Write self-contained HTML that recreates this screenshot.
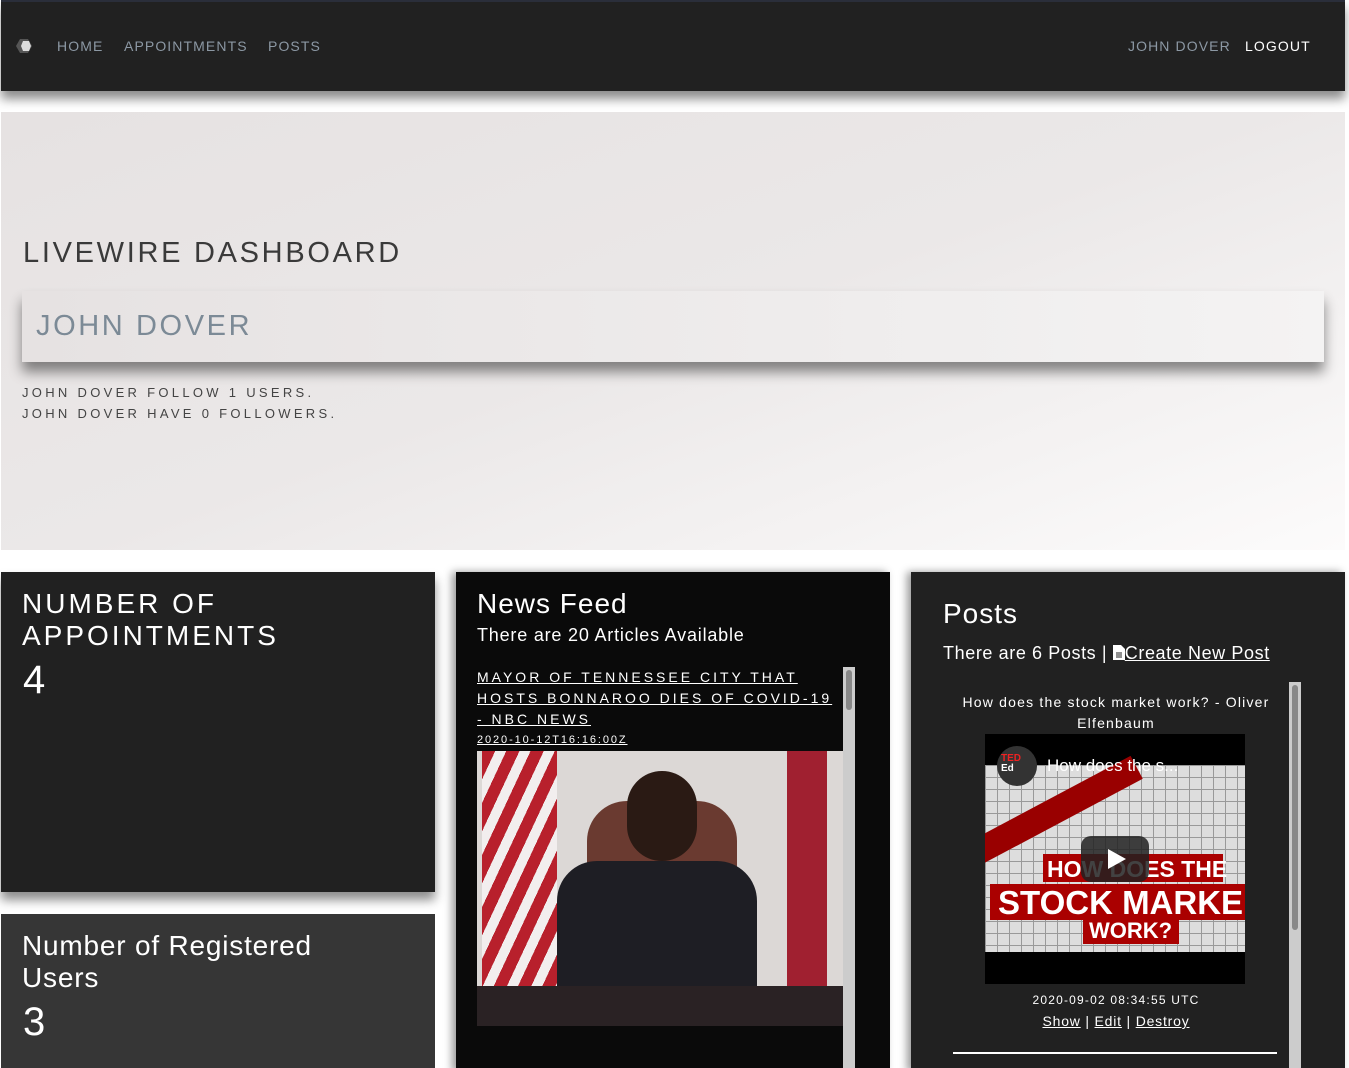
<!DOCTYPE html>
<html><head><meta charset="utf-8"><style>
*{margin:0;padding:0;box-sizing:border-box}
html,body{width:1349px;height:1068px;overflow:hidden}
body{background:#fff;font-family:"Liberation Sans",sans-serif;position:relative}
.abs{position:absolute}
.nav{left:1px;top:0;width:1344px;height:91px;background:#212121;border-top:2px solid #2a2e3a;box-shadow:0 8px 10px rgba(0,0,0,.45)}
.nav a{position:absolute;top:36px;font-size:14px;letter-spacing:1.1px;color:#8c98a4;text-decoration:none}
.hero{left:1px;top:112px;width:1344px;height:438px;background:linear-gradient(160deg,#e6e2e2 0%,#ebe8e8 50%,#fcfbfb 100%)}
.card{background:#212121;color:#fff}
a.u{color:#fff;text-decoration:underline}
</style></head><body>
<div class="abs nav">
 <svg class="abs" style="left:14px;top:36px" width="18" height="16" viewBox="0 0 18 16"><polygon points="5,1 13,1 17,8 13,15 5,15 1,8" fill="#555"/><polygon points="8,3 14,3 16,8 14,13 8,13 6,8" fill="#ddd"/></svg>
 <a style="left:56px">HOME</a><a style="left:123px">APPOINTMENTS</a><a style="left:267px">POSTS</a>
 <a style="left:1127px">JOHN DOVER</a><a style="left:1244px;color:#fff">LOGOUT</a>
</div>
<div class="abs hero">
 <div class="abs" style="left:22px;top:125px;font-size:29px;letter-spacing:2.7px;color:#3a3a3a">LIVEWIRE DASHBOARD</div>
 <div class="abs" style="left:21px;top:179px;width:1302px;height:71px;background:linear-gradient(90deg,#e6e2e2,#f4f3f3);box-shadow:0 10px 12px rgba(0,0,0,.45)">
  <div class="abs" style="left:14px;top:19px;font-size:29px;letter-spacing:2.6px;color:#7c8a96">JOHN DOVER</div></div>
 <div class="abs" style="left:21px;top:270px;font-size:13px;letter-spacing:3.3px;color:#444;line-height:21px">JOHN DOVER FOLLOW 1 USERS.<br>JOHN DOVER HAVE 0 FOLLOWERS.</div>
</div>
<div class="abs card" style="left:1px;top:572px;width:434px;height:320px;box-shadow:0 8px 10px rgba(0,0,0,.45)">
 <div class="abs" style="left:21px;top:16px;font-size:28px;letter-spacing:3px;line-height:32px">NUMBER OF<br>APPOINTMENTS</div>
 <div class="abs" style="left:22px;top:86px;font-size:40px">4</div>
</div>
<div class="abs card" style="left:1px;top:914px;width:434px;height:160px;background:#363636">
 <div class="abs" style="left:21px;top:16px;font-size:28px;letter-spacing:0.8px;line-height:32px">Number of Registered<br>Users</div>
 <div class="abs" style="left:22px;top:86px;font-size:40px">3</div>
</div>
<div class="abs card" style="left:456px;top:572px;width:434px;height:500px;background:#0a0a0a;box-shadow:-4px 0 8px rgba(0,0,0,.4)">
 <div class="abs" style="left:21px;top:16px;font-size:28px;letter-spacing:1px">News Feed</div>
 <div class="abs" style="left:21px;top:53px;font-size:18px;letter-spacing:0.8px">There are 20 Articles Available</div>
 <div class="abs" style="left:21px;top:95px;font-size:14px;letter-spacing:3.0px;line-height:21px"><a class="u">MAYOR OF TENNESSEE CITY THAT<br>HOSTS BONNAROO DIES OF COVID-19<br>- NBC NEWS</a></div>
 <div class="abs" style="left:21px;top:162px;font-size:11px;letter-spacing:1.9px"><a class="u">2020-10-12T16:16:00Z</a></div>
 <div class="abs" style="left:21px;top:179px;width:366px;height:275px;background:#dcd8d6;overflow:hidden">
  <div class="abs" style="left:5px;top:0;width:75px;height:275px;background:repeating-linear-gradient(115deg,#b8202c 0 12px,#f2eeee 12px 22px)"></div>
  <div class="abs" style="left:310px;top:0;width:40px;height:275px;background:#a02030"></div>
  <div class="abs" style="left:110px;top:50px;width:150px;height:110px;background:#6a3a30;border-radius:40px 40px 0 0"></div>
  <div class="abs" style="left:150px;top:20px;width:70px;height:90px;background:#2a1a14;border-radius:35px"></div>
  <div class="abs" style="left:80px;top:110px;width:200px;height:130px;background:#1e1e24;border-radius:40px 40px 0 0"></div>
  <div class="abs" style="left:0;top:235px;width:366px;height:40px;background:#2a2224"></div>
 </div>
 <div class="abs" style="left:387px;top:95px;width:12px;height:410px;background:#ccc"><div class="abs" style="left:3px;top:3px;width:6px;height:40px;background:#888;border-radius:3px"></div></div>
</div>
<div class="abs card" style="left:911px;top:572px;width:434px;height:500px;box-shadow:-4px 0 8px rgba(0,0,0,.4)">
 <div class="abs" style="left:32px;top:26px;font-size:28px;letter-spacing:1px">Posts</div>
 <div class="abs" style="left:32px;top:71px;font-size:18px;letter-spacing:0.6px;white-space:nowrap">There are 6 Posts | <svg width="12" height="15" viewBox="0 0 12 15" style="vertical-align:-1px"><path d="M0 0H8L12 4V15H0Z" fill="#fff"/><path d="M3 8H9M3 10H9M3 12H9" stroke="#222" stroke-width="1"/></svg><a class="u">Create New Post</a></div>
 <div class="abs" style="left:32px;top:120px;width:346px;text-align:center;font-size:14px;letter-spacing:1.2px;line-height:21px">How does the stock market work? - Oliver<br>Elfenbaum</div>
 <div class="abs" style="left:74px;top:162px;width:260px;height:250px;background:#000;overflow:hidden">
  <div class="abs" style="left:0;top:31px;width:260px;height:187px;background:#ddd;background-image:linear-gradient(#999 1px,transparent 1px),linear-gradient(90deg,#999 1px,transparent 1px);background-size:12px 12px"></div>
  <div class="abs" style="left:-10px;top:108px;width:190px;height:26px;background:#900;transform:rotate(-28deg);transform-origin:0 100%"></div>
  <div class="abs" style="left:12px;top:12px;width:40px;height:40px;border-radius:20px;background:#333;color:#e22;font-size:10px;font-weight:bold;padding:8px 4px;line-height:10px">TED<br><span style="color:#fff">Ed</span></div>
  <div class="abs" style="left:62px;top:22px;color:#fff;font-size:17px">How does the s...</div>
  <div class="abs" style="left:58px;top:120px;width:180px;height:28px;background:#a00"></div>
  <div class="abs" style="left:62px;top:122px;color:#fff;font-weight:bold;font-size:23px">HOW DOES THE</div>
  <div class="abs" style="left:5px;top:150px;width:260px;height:36px;background:#a00;color:#fff;font-weight:bold;font-size:33px;white-space:nowrap;padding-left:8px">STOCK MARKE</div>
  <div class="abs" style="left:98px;top:184px;width:96px;height:26px;background:#a00;color:#fff;font-weight:bold;font-size:22px;padding-left:6px">WORK?</div>
  <div class="abs" style="left:96px;top:102px;width:68px;height:46px;background:rgba(33,33,33,.85);border-radius:10px"><div class="abs" style="left:27px;top:13px;border-left:18px solid #fff;border-top:10px solid transparent;border-bottom:10px solid transparent"></div></div>
 </div>
 <div class="abs" style="left:32px;top:421px;width:346px;text-align:center;font-size:12px;letter-spacing:1.2px">2020-09-02 08:34:55 UTC</div>
 <div class="abs" style="left:32px;top:441px;width:346px;text-align:center;font-size:14px;letter-spacing:0.8px"><a class="u">Show</a> | <a class="u">Edit</a> | <a class="u">Destroy</a></div>
 <div class="abs" style="left:42px;top:480px;width:324px;height:2px;background:#fff"></div>
 <div class="abs" style="left:378px;top:110px;width:12px;height:400px;background:#ccc"><div class="abs" style="left:3px;top:3px;width:6px;height:245px;background:#888;border-radius:3px"></div></div>
</div>
</body></html>
